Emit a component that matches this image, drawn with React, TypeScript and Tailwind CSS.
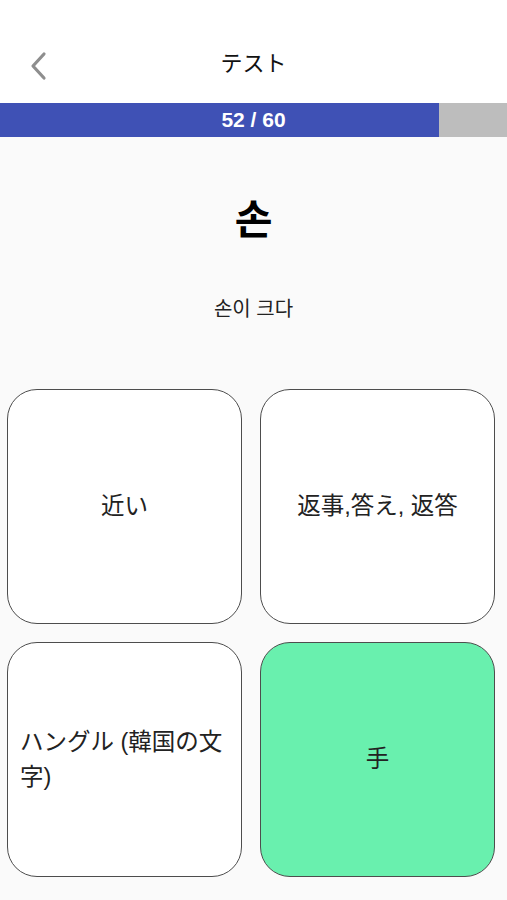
import React from 'react';

const choices = [
  { text: '近い', correct: false, align: 'center' },
  { text: '返事,答え, 返答', correct: false, align: 'center' },
  { text: 'ハングル (韓国の文字)', correct: false, align: 'left' },
  { text: '手', correct: true, align: 'center' },
];

const BackIcon = () => (
  <svg width="22" height="30" viewBox="0 0 22 30" fill="none">
    <path d="M17 3 L6 15 L17 27" stroke="#8e8e8e" strokeWidth="3.2" strokeLinecap="round" strokeLinejoin="round" />
  </svg>
);

const ProgressBar = ({ current, total }: { current: number; total: number }) => {
  const pct = (current / total) * 100;
  return (
    <div className="relative h-[34px] w-full bg-[#bdbdbd]">
      <div className="h-full bg-[#3f51b5]" style={{ width: `${pct}%` }} />
      <div className="absolute inset-0 flex items-center justify-center text-[21px] font-bold text-white">
        {current} / {total}
      </div>
    </div>
  );
};

export default function App() {
  return (
    <div
      className="flex h-[900px] w-[507px] flex-col bg-[#fafafa] text-[#222]"
      style={{ fontFamily: '"Liberation Sans", "Noto Sans CJK JP", sans-serif' }}
    >
      {/* header */}
      <div className="relative flex h-[103px] items-end justify-center bg-white pb-[28px]">
        <div className="absolute left-[27px] top-[51px]">
          <BackIcon />
        </div>
        <span className="text-[22px] leading-none text-[#111]">テスト</span>
      </div>

      <ProgressBar current={52} total={60} />

      <div className="flex flex-col items-center">
        <div className="mt-[63px] h-[41px] text-[41px] font-bold leading-[41px] text-black">손</div>
        <div className="mt-[58px] h-[20px] text-[20px] leading-[20px] text-[#222]">손이 크다</div>
      </div>

      <div className="mt-[70px] grid grid-cols-[235px_235px] gap-[18px] pl-[7px]">
        {choices.map((c, i) => (
          <div
            key={i}
            className={
              'flex h-[235px] items-center rounded-[30px] border-[1.5px] border-[#4d4d4d] px-[12px] text-[23.5px] leading-[35px] text-[#222] ' +
              (c.correct ? 'bg-[#69f0ae] ' : 'bg-white ') +
              (c.align === 'left' ? 'justify-start text-left' : 'justify-center text-center')
            }
          >
            {c.text}
          </div>
        ))}
      </div>
    </div>
  );
}
